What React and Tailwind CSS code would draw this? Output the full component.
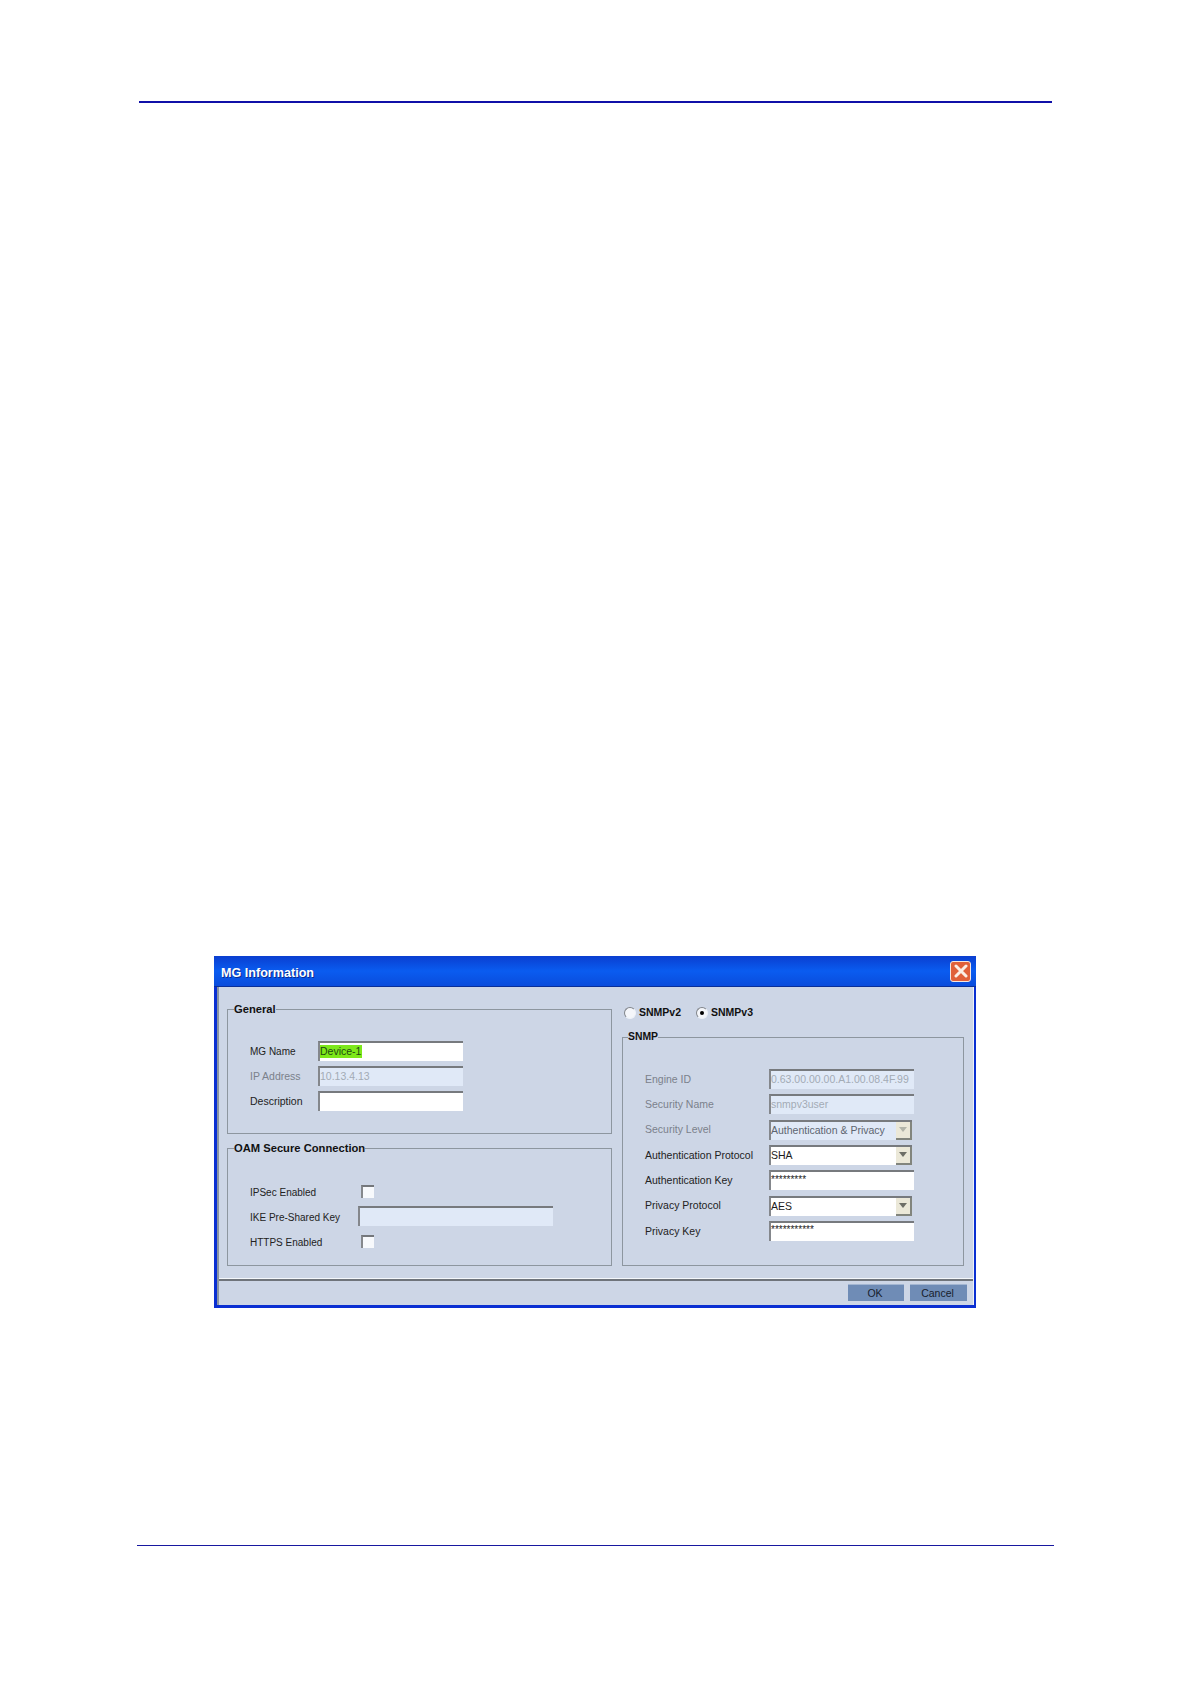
import React from 'react';

const rowClass = 'flex items-center h-[20px]';

// Sunken text box, plain or disabled
const Field = ({ value, disabled, highlight, width = 'w-[145px]', small }) => (
  <div
    className={`${width} h-[20px] flex items-center border-t-2 border-l-2 border-t-[#777a7e] border-l-[#84878c] overflow-hidden whitespace-nowrap ${
      disabled ? 'bg-[#e0e9f7] text-[#a3abb5]' : 'bg-white text-[#1b1b1b]'
    } ${small ? 'text-[10px] pb-[4px]' : 'text-[10.5px] pb-[1px]'}`}
  >
    {highlight ? <span className="bg-[#7de81a] text-[#1d4a12] h-[13px] leading-[13px] pr-[1px]">{value}</span> : value}
  </div>
);

const Combo = ({ value, disabled }) => (
  <div
    className={`w-[143px] h-[20px] flex items-center justify-between border-t-2 border-l-2 border-t-[#777a7e] border-l-[#84878c] text-[10.5px] ${
      disabled ? 'bg-[#e0e9f7] text-[#5d6570]' : 'bg-white text-[#1b1b1b]'
    }`}
  >
    <span>{value}</span>
    <span className="w-[16px] h-[18px] flex items-center justify-center bg-[#ebe8d8] border-r-2 border-b-2 border-r-[#82857d] border-b-[#82857d]">
      <svg width="8" height="5" viewBox="0 0 8 5">
        <path d="M0 0H8L4 5Z" fill={disabled ? '#b2b4a9' : '#6d6e66'} />
      </svg>
    </span>
  </div>
);

const Check = () => (
  <div className="w-[13px] h-[13px] -ml-px bg-[#f7f9fc] border-t-2 border-l-2 border-t-[#74777b] border-l-[#85888c]" />
);

const Radio = ({ checked }) => (
  <div className="w-[12px] h-[12px] rounded-full bg-[#f4f6fa] border border-t-[#80848a] border-l-[#80848a] border-r-[#eef2f8] border-b-[#eef2f8] flex items-center justify-center">
    {checked && <div className="w-[4px] h-[4px] rounded-full bg-black" />}
  </div>
);

const Group = ({ title, className, legendClass = 'ml-[6px] text-[11.2px]', children }) => (
  <fieldset className={`border border-[#8d969f] ${className}`}>
    <legend className={`h-[14px] leading-[14px] font-bold text-[#111] ${legendClass}`}>{title}</legend>
    {children}
  </fieldset>
);

const Row = ({ label, labelWidth, disabled, tight, raised, children }) => (
  <div className={rowClass}>
    <span
      className={`${labelWidth} shrink-0 ${raised ? 'pt-[1px]' : 'pt-[2px]'} ${tight ? 'text-[10px]' : ''} ${
        disabled ? 'text-[#7b818b]' : 'text-[#222]'
      }`}
    >
      {label}
    </span>
    {children}
  </div>
);

const App = () => {
  return (
    <div className="relative w-[1190px] h-[1684px] bg-white pt-[101px] font-['Liberation_Sans',Arial,sans-serif]">
      <div className="ml-[139px] w-[913px] h-[2px] bg-[#1010a8]" />

      <div className="ml-[214px] mt-[853px] w-[762px] h-[352px] flex flex-col bg-[#0a2fd2]">
        {/* Title bar */}
        <div className="h-[31px] shrink-0 flex items-center justify-between pl-[7px] pr-[5px] border-b border-b-[#0a2f98] bg-gradient-to-b from-[#0b3ed0] via-[#0a5cf0] to-[#0a4cdc]">
          <span className="pt-[4px] font-bold text-[12.6px] text-white [text-shadow:1px_1px_0_#0a2a90]">MG Information</span>
          <div className="w-[21px] h-[21px] rounded-[3px] border border-[#f4e6e0] bg-[#e0603a] flex items-center justify-center">
            <svg width="14" height="14" viewBox="0 0 14 14">
              <path d="M2 2L12 12M12 2L2 12" stroke="#fbeee6" strokeWidth="3" strokeLinecap="round" />
            </svg>
          </div>
        </div>

        {/* Window body */}
        <div className="flex-1 flex flex-col ml-[3px] mr-[2px] mb-[3px] border-l-2 border-l-[#8a94a2] border-r border-r-[#eef2f8] bg-[#cdd6e6] text-[10.5px]">
          <div className="h-[292px] flex gap-[10px] pl-[8px] pt-[15px] shrink-0">
            <div className="w-[385px] flex flex-col gap-[7px]">
              <Group title="General" className="h-[132px]">
                <div className="flex flex-col gap-[5px] pl-[22px] pt-[25px]">
                  <Row label="MG Name" labelWidth="w-[68px]" tight raised>
                    <Field value="Device-1" highlight />
                  </Row>
                  <Row label="IP Address" labelWidth="w-[68px]" disabled>
                    <Field value="10.13.4.13" disabled />
                  </Row>
                  <Row label="Description" labelWidth="w-[68px]">
                    <Field value="" />
                  </Row>
                </div>
              </Group>
              <Group title="OAM Secure Connection" className="h-[125px]">
                <div className="flex flex-col gap-[5px] pl-[22px] pt-[26px]">
                  <Row label="IPSec Enabled" labelWidth="w-[112px]" tight>
                    <Check />
                  </Row>
                  <Row label="IKE Pre-Shared Key" labelWidth="w-[108px]" tight>
                    <Field value="" disabled width="w-[195px]" />
                  </Row>
                  <Row label="HTTPS Enabled" labelWidth="w-[112px]" tight>
                    <Check />
                  </Row>
                </div>
              </Group>
            </div>

            <div className="w-[342px]">
              <div className="h-[18px] mt-[2px] mb-[8px] flex items-center pl-[2px] font-bold text-[#111]">
                <Radio />
                <span className="ml-[3px] w-[57px]">SNMPv2</span>
                <Radio checked />
                <span className="ml-[3px]">SNMPv3</span>
              </div>
              <Group title="SNMP" className="h-[236px]" legendClass="ml-[5px] text-[10.4px]">
                <div className="flex flex-col gap-[5.33px] pl-[22px] pt-[25px]">
                  <Row label="Engine ID" labelWidth="w-[124px]" disabled raised>
                    <Field value="0.63.00.00.00.A1.00.08.4F.99" disabled />
                  </Row>
                  <Row label="Security Name" labelWidth="w-[124px]" disabled raised>
                    <Field value="snmpv3user" disabled />
                  </Row>
                  <Row label="Security Level" labelWidth="w-[124px]" disabled raised>
                    <Combo value="Authentication & Privacy" disabled />
                  </Row>
                  <Row label="Authentication Protocol" labelWidth="w-[124px]" raised>
                    <Combo value="SHA" />
                  </Row>
                  <Row label="Authentication Key" labelWidth="w-[124px]" raised>
                    <Field value="*********" small />
                  </Row>
                  <Row label="Privacy Protocol" labelWidth="w-[124px]" raised>
                    <Combo value="AES" />
                  </Row>
                  <Row label="Privacy Key" labelWidth="w-[124px]" raised>
                    <Field value="***********" small />
                  </Row>
                </div>
              </Group>
            </div>
          </div>

          {/* Footer buttons */}
          <div className="flex-1 flex justify-end items-start gap-[6px] pt-[3px] pr-[6px] border-t-2 border-t-[#6f747b] shadow-[0_-1px_0_#f4f7fb]">
            <button className="w-[56px] h-[17px] pt-[1px] pr-[2px] bg-[#6f8cb6] border-t border-t-[#a3b6d2] text-[#17202c] text-[10.5px]">OK</button>
            <button className="w-[57px] h-[17px] pt-[1px] pr-[2px] bg-[#6f8cb6] border-t border-t-[#a3b6d2] text-[#17202c] text-[10.5px]">Cancel</button>
          </div>
        </div>
      </div>

      <div className="ml-[137px] mt-[237px] w-[917px] h-px bg-[#1818a0]" />
    </div>
  );
};

export default App;
